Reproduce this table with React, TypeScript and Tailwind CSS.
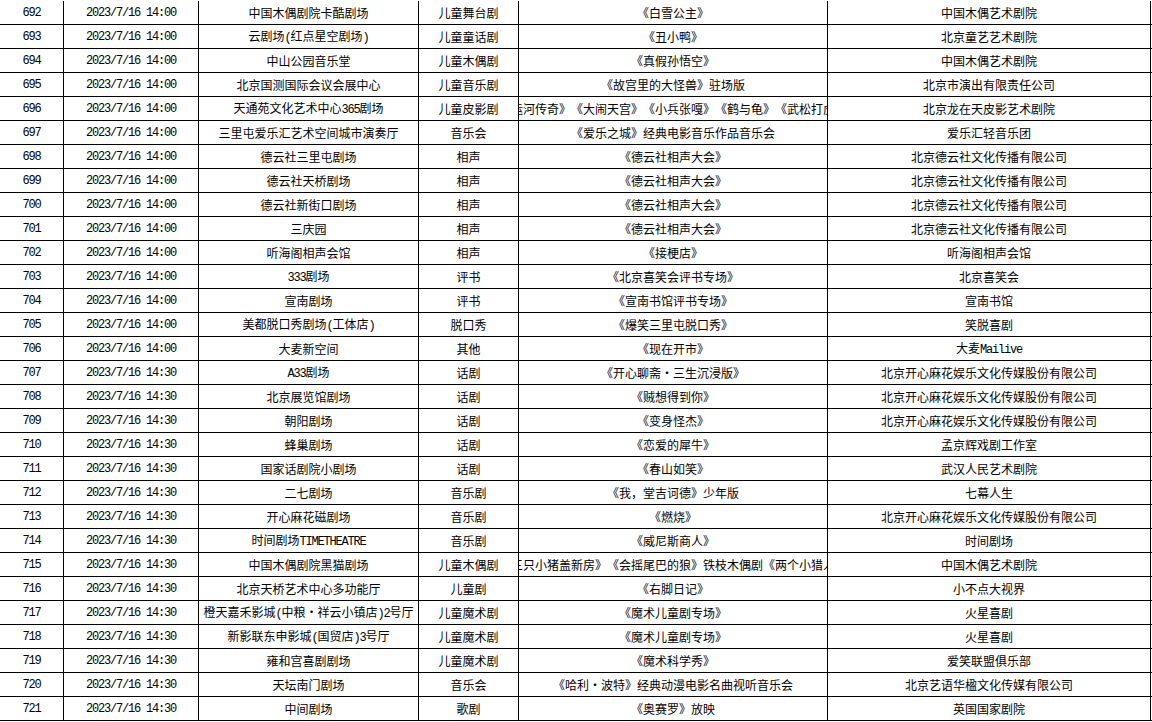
const rows: [string, string, string, string, string, string][] = [
  ["692", "2023/7/16 14:00", "中国木偶剧院卡酷剧场", "儿童舞台剧", "《白雪公主》", "中国木偶艺术剧院"],
  ["693", "2023/7/16 14:00", "云剧场(红点星空剧场)", "儿童童话剧", "《丑小鸭》", "北京童艺艺术剧院"],
  ["694", "2023/7/16 14:00", "中山公园音乐堂", "儿童木偶剧", "《真假孙悟空》", "中国木偶艺术剧院"],
  ["695", "2023/7/16 14:00", "北京国测国际会议会展中心", "儿童音乐剧", "《故宫里的大怪兽》驻场版", "北京市演出有限责任公司"],
  ["696", "2023/7/16 14:00", "天通苑文化艺术中心365剧场", "儿童皮影剧", "《运河传奇》《大闹天宫》《小兵张嘎》《鹤与龟》《武松打虎》", "北京龙在天皮影艺术剧院"],
  ["697", "2023/7/16 14:00", "三里屯爱乐汇艺术空间城市演奏厅", "音乐会", "《爱乐之城》经典电影音乐作品音乐会", "爱乐汇轻音乐团"],
  ["698", "2023/7/16 14:00", "德云社三里屯剧场", "相声", "《德云社相声大会》", "北京德云社文化传播有限公司"],
  ["699", "2023/7/16 14:00", "德云社天桥剧场", "相声", "《德云社相声大会》", "北京德云社文化传播有限公司"],
  ["700", "2023/7/16 14:00", "德云社新街口剧场", "相声", "《德云社相声大会》", "北京德云社文化传播有限公司"],
  ["701", "2023/7/16 14:00", "三庆园", "相声", "《德云社相声大会》", "北京德云社文化传播有限公司"],
  ["702", "2023/7/16 14:00", "听海阁相声会馆", "相声", "《接梗店》", "听海阁相声会馆"],
  ["703", "2023/7/16 14:00", "333剧场", "评书", "《北京喜笑会评书专场》", "北京喜笑会"],
  ["704", "2023/7/16 14:00", "宣南剧场", "评书", "《宣南书馆评书专场》", "宣南书馆"],
  ["705", "2023/7/16 14:00", "美都脱口秀剧场(工体店)", "脱口秀", "《爆笑三里屯脱口秀》", "笑脱喜剧"],
  ["706", "2023/7/16 14:00", "大麦新空间", "其他", "《现在开市》", "大麦Mailive"],
  ["707", "2023/7/16 14:30", "A33剧场", "话剧", "《开心聊斋·三生沉浸版》", "北京开心麻花娱乐文化传媒股份有限公司"],
  ["708", "2023/7/16 14:30", "北京展览馆剧场", "话剧", "《贼想得到你》", "北京开心麻花娱乐文化传媒股份有限公司"],
  ["709", "2023/7/16 14:30", "朝阳剧场", "话剧", "《变身怪杰》", "北京开心麻花娱乐文化传媒股份有限公司"],
  ["710", "2023/7/16 14:30", "蜂巢剧场", "话剧", "《恋爱的犀牛》", "孟京辉戏剧工作室"],
  ["711", "2023/7/16 14:30", "国家话剧院小剧场", "话剧", "《春山如笑》", "武汉人民艺术剧院"],
  ["712", "2023/7/16 14:30", "二七剧场", "音乐剧", "《我，堂吉诃德》少年版", "七幕人生"],
  ["713", "2023/7/16 14:30", "开心麻花磁剧场", "音乐剧", "《燃烧》", "北京开心麻花娱乐文化传媒股份有限公司"],
  ["714", "2023/7/16 14:30", "时间剧场TIMETHEATRE", "音乐剧", "《威尼斯商人》", "时间剧场"],
  ["715", "2023/7/16 14:30", "中国木偶剧院黑猫剧场", "儿童木偶剧", "《三只小猪盖新房》《会摇尾巴的狼》铁枝木偶剧《两个小猎人》", "中国木偶艺术剧院"],
  ["716", "2023/7/16 14:30", "北京天桥艺术中心多功能厅", "儿童剧", "《右脚日记》", "小不点大视界"],
  ["717", "2023/7/16 14:30", "橙天嘉禾影城(中粮·祥云小镇店)2号厅", "儿童魔术剧", "《魔术儿童剧专场》", "火星喜剧"],
  ["718", "2023/7/16 14:30", "新影联东申影城(国贸店)3号厅", "儿童魔术剧", "《魔术儿童剧专场》", "火星喜剧"],
  ["719", "2023/7/16 14:30", "雍和宫喜剧剧场", "儿童魔术剧", "《魔术科学秀》", "爱笑联盟俱乐部"],
  ["720", "2023/7/16 14:30", "天坛南门剧场", "音乐会", "《哈利·波特》经典动漫电影名曲视听音乐会", "北京艺语华楹文化传媒有限公司"],
  ["721", "2023/7/16 14:30", "中间剧场", "歌剧", "《奥赛罗》放映", "英国国家剧院"],
];

const widths = ["w-[64px]", "w-[135px]", "w-[220px]", "w-[100px]", "w-[309px]", "w-[323px]"];

// latin runs look half-width (6px pitch) in the sheet, so set them in mono
const Mixed = ({ text }: { text: string }) => (
  <span className="font-['Noto_Sans_CJK_SC',sans-serif] text-[12px] leading-[14px]">
    {text.split(/([\x21-\x7e]+)/).map((part, i) =>
      /^[\x21-\x7e]+$/.test(part) ? (
        <span key={i} className="font-['Liberation_Mono',monospace] text-[12px] tracking-[-1.2px]">
          {part}
        </span>
      ) : (
        <span key={i}>{part}</span>
      )
    )}
  </span>
);

const App = () => {
  return (
    <div className="w-[1152px] h-[722px] bg-white text-black overflow-hidden pt-px [text-spacing-trim:space-all]">
      {rows.map(row => (
        <div key={row[0]} className="flex h-6 border-b border-black">
          {row.map((cell, i) => (
            <div
              key={i}
              className={`${widths[i]} shrink-0 flex items-center justify-center overflow-hidden whitespace-nowrap border-r border-black`}
            >
              {i < 2 ? (
                <span className="font-['Liberation_Mono',monospace] text-[12px] tracking-[-1.2px] leading-[14px]">
                  {cell}
                </span>
              ) : (
                <Mixed text={cell} />
              )}
            </div>
          ))}
        </div>
      ))}
    </div>
  );
};

export default App;
